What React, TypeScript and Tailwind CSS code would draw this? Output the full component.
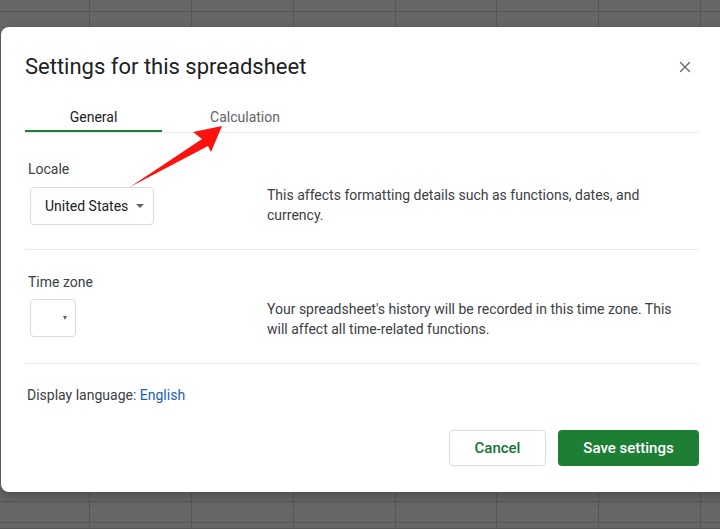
import React from 'react';
import { X } from 'lucide-react';

const cols = [90, 102, 102, 102, 101, 102, 102, 40];
const rows = [12, 490, 21, 6];

const Caret = ({ small }: { small?: boolean }) => (
  <span
    className={
      small
        ? 'inline-block w-0 h-0 border-l-[2.5px] border-r-[2.5px] border-t-[4px] border-l-transparent border-r-transparent border-t-[#5f6368]'
        : 'inline-block w-0 h-0 border-l-[4px] border-r-[4px] border-t-[4px] border-l-transparent border-r-transparent border-t-[#5f6368]'
    }
  />
);

const App = () => {
  return (
    <div className="relative w-[720px] h-[529px] overflow-hidden bg-[#666666] font-['Roboto',sans-serif]">
      {/* sheet grid behind the dialog */}
      <div className="flex flex-col">
        {rows.map((h, r) => (
          <div key={r} className="flex shrink-0 border-b border-[#575757]" style={{ height: h }}>
            {cols.map((w, c) => (
              <div key={c} className="shrink-0 border-r border-[#575757]" style={{ width: w }} />
            ))}
          </div>
        ))}
      </div>

      {/* dialog */}
      <div className="absolute left-[1px] top-[27px] w-[760px] h-[465px] bg-white rounded-lg shadow-[0_4px_12px_rgba(0,0,0,0.25)] pl-6 pr-[62px] flex flex-col">
        <div className="flex items-center justify-between pt-[22px] h-[58px]">
          <h1 className="text-[22px] leading-7 text-[#202124]">Settings for this spreadsheet</h1>
          <X size={18} strokeWidth={1.6} className="text-[#5f6368] mr-[5px]" />
        </div>

        <div className="mt-[21px] flex border-b border-[#e8eaed] text-sm">
          <div className="w-[137px] h-[26px] flex items-start justify-center border-b-2 border-[#188038] text-[#202124] pt-[1px]">
            General
          </div>
          <div className="w-[166px] h-[26px] flex items-start justify-center text-[#5f6368] pt-[1px]">
            Calculation
          </div>
        </div>

        {/* locale */}
        <div className="flex pt-[26px] pb-[24px] pl-[3px] border-b border-[#e8eaed]">
          <div className="w-[239px] shrink-0">
            <div className="text-sm leading-5 text-[#3c4043]">Locale</div>
            <div className="mt-[8px] ml-[2px] w-[124px] h-[38px] border border-[#dadce0] rounded flex items-center justify-between pl-[14px] pr-[9px] text-sm text-[#202124]">
              <span>United States</span>
              <Caret />
            </div>
          </div>
          <p className="mt-[26px] w-[420px] text-sm leading-5 text-[#3c4043]">
            This affects formatting details such as functions, dates, and currency.
          </p>
        </div>

        {/* time zone */}
        <div className="flex pt-[22px] pb-[24px] pl-[3px] border-b border-[#e8eaed]">
          <div className="w-[239px] shrink-0">
            <div className="text-sm leading-5 text-[#3c4043]">Time zone</div>
            <div className="mt-[7px] ml-[2px] w-[46px] h-[38px] border border-[#dadce0] rounded flex items-center justify-end pr-[8px]">
              <Caret small />
            </div>
          </div>
          <p className="mt-[27px] w-[420px] text-sm leading-5 text-[#3c4043]">
            Your spreadsheet's history will be recorded in this time zone. This will affect all time-related functions.
          </p>
        </div>

        <div className="mt-[21px] pl-[2px] text-sm leading-5 text-[#3c4043]">
          Display language: <span className="text-[#1a5fb4]">English</span>
        </div>

        <div className="mt-[25px] flex justify-end gap-3">
          <button className="w-[97px] h-[36px] border border-[#dadce0] rounded text-[15px] font-medium text-[#137333]">
            Cancel
          </button>
          <button className="w-[141px] h-[36px] rounded bg-[#1e7e34] text-[15px] font-medium text-white">
            Save settings
          </button>
        </div>
      </div>

      {/* annotation arrow */}
      <svg className="absolute left-0 top-0 pointer-events-none" width="720" height="529">
        <polygon points="222,126 193,132 202,139 130,187 208,146 211,152" fill="#ff1010" />
      </svg>
    </div>
  );
};

export default App;
